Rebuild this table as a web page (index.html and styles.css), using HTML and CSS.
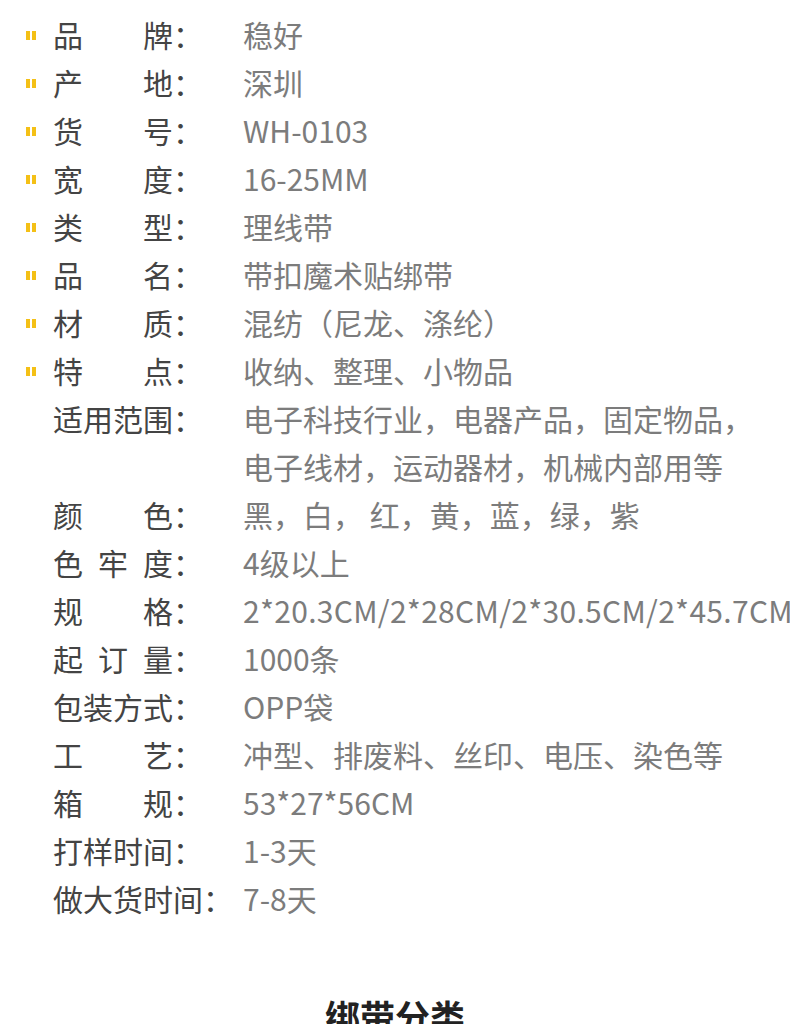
FILE: index.html
```html
<!DOCTYPE html>
<html lang="zh-CN">
<head>
<meta charset="utf-8">
<link rel="stylesheet" href="styles.css">
</head>
<body>
<div class="page">
  <ul class="specs">
    <li class="row dot"><span class="label"><span class="name">品牌</span>：</span><span class="value">稳好</span></li>
    <li class="row dot"><span class="label"><span class="name">产地</span>：</span><span class="value">深圳</span></li>
    <li class="row dot"><span class="label"><span class="name">货号</span>：</span><span class="value">WH-0103</span></li>
    <li class="row dot"><span class="label"><span class="name">宽度</span>：</span><span class="value">16-25MM</span></li>
    <li class="row dot"><span class="label"><span class="name">类型</span>：</span><span class="value">理线带</span></li>
    <li class="row dot"><span class="label"><span class="name">品名</span>：</span><span class="value">带扣魔术贴绑带</span></li>
    <li class="row dot"><span class="label"><span class="name">材质</span>：</span><span class="value">混纺（尼龙、涤纶）</span></li>
    <li class="row dot"><span class="label"><span class="name">特点</span>：</span><span class="value">收纳、整理、小物品</span></li>
    <li class="row"><span class="label"><span class="name">适用范围</span>：</span><span class="value">电子科技行业，电器产品，固定物品，<br>电子线材，运动器材，机械内部用等</span></li>
    <li class="row"><span class="label"><span class="name">颜色</span>：</span><span class="value">黑，白， 红，黄，蓝，绿，紫</span></li>
    <li class="row"><span class="label"><span class="name">色牢度</span>：</span><span class="value">4级以上</span></li>
    <li class="row"><span class="label"><span class="name">规格</span>：</span><span class="value wide">2*20.3CM/2*28CM/2*30.5CM/2*45.7CM</span></li>
    <li class="row"><span class="label"><span class="name">起订量</span>：</span><span class="value">1000条</span></li>
    <li class="row"><span class="label"><span class="name">包装方式</span>：</span><span class="value">OPP袋</span></li>
    <li class="row"><span class="label"><span class="name">工艺</span>：</span><span class="value">冲型、排废料、丝印、电压、染色等</span></li>
    <li class="row"><span class="label"><span class="name">箱规</span>：</span><span class="value">53*27*56CM</span></li>
    <li class="row"><span class="label"><span class="name">打样时间</span>：</span><span class="value">1-3天</span></li>
    <li class="row"><span class="label"><span class="name long">做大货时间</span>：</span><span class="value">7-8天</span></li>
  </ul>
  <h2 class="section-title">绑带分类</h2>
</div>
</body>
</html>
```

FILE: styles.css
```css
html, body {
  margin: 0;
  padding: 0;
  background: #ffffff;
}
body {
  font-family: "Noto Sans CJK SC", "Noto Sans", sans-serif;
  overflow: hidden;
}
.page {
  width: 790px;
  padding-top: 10px;
}
.specs {
  list-style: none;
  margin: 0;
  padding: 0 0 0 53px;
}
.row {
  display: flex;
  align-items: flex-start;
  font-size: 30px;
  line-height: 48px;
  position: relative;
  white-space: nowrap;
}
.row.dot::before {
  content: "";
  position: absolute;
  left: -27px;
  top: 21px;
  width: 4px;
  height: 9px;
  background: #f4c016;
  box-shadow: 6px 0 0 #f4c016;
}
.label {
  display: flex;
  width: 150px;
  flex: none;
  color: #444444;
  margin-right: 40px;
}
.name {
  display: inline-block;
  width: 120px;
  text-align: justify;
  text-align-last: justify;
}
.name.long {
  width: auto;
  text-align: left;
  text-align-last: left;
}
.value {
  color: #7c7c7c;
}
.value.wide {
  letter-spacing: 0.3px;
}
.section-title {
  margin: 70px 0 0 0;
  text-align: center;
  font-size: 35px;
  font-weight: bold;
  color: #222222;
  line-height: 48px;
}
```
